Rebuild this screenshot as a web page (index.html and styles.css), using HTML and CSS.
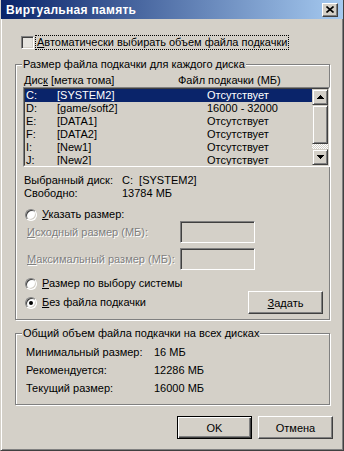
FILE: index.html
```html
<!DOCTYPE html>
<html lang="ru">
<head>
    <meta charset="UTF-8">
    <meta name="viewport" content="width=device-width, initial-scale=1.0">
    <title>Виртуальная память</title>
    <link rel="stylesheet" href="styles.css">
</head>
<body>

<div class="window">
    <!-- Title bar -->
    <div class="titlebar">
        <span class="title">Виртуальная память</span>
        <span class="close-btn">
            <svg width="8" height="7" viewBox="0 0 8 7"><path d="M0.5 0.5 L7.5 6.5 M7.5 0.5 L0.5 6.5" stroke="#000" stroke-width="1.6"/></svg>
        </span>
    </div>

    <div class="dialog">
        <div class="auto-row">
            <span class="checkbox"></span>
            <span class="focus-text"><u>А</u>втоматически выбирать объем файла подкачки</span>
        </div>

        <!-- Per-drive settings -->
        <fieldset class="group group-drives">
            <legend>Размер файла подкачки для каждого диска</legend>

            <div class="list-header">
                <span class="col-drive">Дис<u>к</u> [метка тома]</span>
                <span>Файл подкачки (МБ)</span>
            </div>

            <div class="listbox">
                <div class="list-inner">
                    <div class="list-rows">
                        <div class="list-row selected"><span>C:</span><span>[SYSTEM2]</span><span>Отсутствует</span></div>
                        <div class="list-row"><span>D:</span><span>[game/soft2]</span><span>16000 - 32000</span></div>
                        <div class="list-row"><span>E:</span><span>[DATA1]</span><span>Отсутствует</span></div>
                        <div class="list-row"><span>F:</span><span>[DATA2]</span><span>Отсутствует</span></div>
                        <div class="list-row"><span>I:</span><span>[New1]</span><span>Отсутствует</span></div>
                        <div class="list-row"><span>J:</span><span>[New2]</span><span>Отсутствует</span></div>
                    </div>
                    <div class="scrollbar">
                        <div class="sb-btn">
                            <svg width="7" height="4" viewBox="0 0 7 4" shape-rendering="crispEdges"><path d="M3 0h1v1h1v1h1v1h1v1h-7v-1h1v-1h1v-1h1z" fill="#000"/></svg>
                        </div>
                        <div class="sb-thumb"></div>
                        <div class="sb-track"></div>
                        <div class="sb-btn">
                            <svg width="7" height="4" viewBox="0 0 7 4" shape-rendering="crispEdges"><path d="M0 0h7v1h-1v1h-1v1h-1v1h-1v-1h-1v-1h-1v-1h-1z" fill="#000"/></svg>
                        </div>
                    </div>
                </div>
            </div>

            <div class="info-row first"><span class="info-label">Выбранный диск:</span><span>C:&nbsp; [SYSTEM2]</span></div>
            <div class="info-row"><span class="info-label">Свободно:</span><span>13784 МБ</span></div>

            <div class="radio-row custom">
                <span class="radio"></span>
                <span class="radio-text"><u>У</u>казать размер:</span>
            </div>
            <div class="size-row">
                <span class="size-label disabled"><u>И</u>сходный размер (МБ):</span>
                <span class="textbox"></span>
            </div>
            <div class="size-row second">
                <span class="size-label disabled"><u>М</u>аксимальный размер (МБ):</span>
                <span class="textbox"></span>
            </div>

            <div class="radio-row system">
                <span class="radio"></span>
                <span class="radio-text"><u>Р</u>азмер по выбору системы</span>
            </div>
            <div class="radio-row none">
                <span class="radio checked"></span>
                <span class="radio-text"><u>Б</u>ез файла подкачки</span>
                <span class="btn set-btn"><u>З</u>адать</span>
            </div>
        </fieldset>

        <!-- Totals for all drives -->
        <fieldset class="group group-total">
            <legend>Общий объем файла подкачки на всех дисках</legend>
            <div class="total-row"><span class="total-label">Минимальный размер:</span><span>16 МБ</span></div>
            <div class="total-row"><span class="total-label">Рекомендуется:</span><span>12286 МБ</span></div>
            <div class="total-row"><span class="total-label">Текущий размер:</span><span>16000 МБ</span></div>
        </fieldset>

        <div class="buttons">
            <span class="btn btn-default">OK</span>
            <span class="btn">Отмена</span>
        </div>
    </div>
</div>

</body>
</html>
```

FILE: styles.css
```css
body {
    margin: 0;
    background-color: #d4d0c8;
    font-family: "Liberation Sans", Arial, sans-serif;
    font-size: 11px;
    color: #000;
}

u {
    text-decoration-thickness: 1px;
    text-underline-offset: 1px;
}

/* Window frame */
.window {
    width: 344px;
    height: 451px;
    box-sizing: border-box;
    border: 1px solid;
    border-top: 0;
    border-color: #d4d0c8 #404040 #404040 #d4d0c8;
    box-shadow: inset 1px 0 #fff, inset -1px -1px #808080;
    background-color: #d4d0c8;
    white-space: nowrap;
}

.titlebar {
    height: 19px;
    display: flex;
    align-items: center;
    justify-content: space-between;
    padding: 0 5px 0 5px;
    background: linear-gradient(to right, #0a246a, #a6caf0);
    color: #fff;
    font-size: 12px;
    font-weight: bold;
    letter-spacing: 0.3px;
}

.close-btn {
    width: 16px;
    height: 14px;
    box-sizing: border-box;
    display: flex;
    align-items: center;
    justify-content: center;
    background-color: #d4d0c8;
    border: 1px solid;
    border-color: #fff #404040 #404040 #fff;
    box-shadow: inset -1px -1px #808080;
}

.dialog {
    padding: 16px 13px 0 14px;
}

/* Auto checkbox */
.auto-row {
    display: flex;
    align-items: center;
    height: 15px;
    margin-left: 6px;
}

.checkbox {
    width: 13px;
    height: 13px;
    box-sizing: border-box;
    background-color: #e6e4df;
    border: 1px solid;
    border-color: #808080 #fff #fff #808080;
    box-shadow: inset 1px 1px #404040, inset -1px -1px #d4d0c8;
}

.focus-text {
    margin-left: 1px;
    padding: 0 1px;
    line-height: 13px;
    border: 1px dotted #000;
}

/* Group boxes */
.group {
    margin: 7px 0 0 0;
    padding: 3px 0 5px 7px;
    min-width: 0;
    border: 1px solid #808080;
    box-shadow: inset 1px 1px #fff, 1px 1px #fff;
}

.group legend {
    padding: 0 1px;
    margin-left: -1px;
    line-height: 14px;
    background-color: #d4d0c8;
}

.list-header {
    display: flex;
    height: 13px;
    line-height: 13px;
    padding-left: 1px;
}

.col-drive {
    width: 154px;
}

/* Drive list */
.listbox {
    height: 80px;
    box-sizing: border-box;
    margin-right: -1px;
    border: 1px solid;
    border-color: #808080 #fff #fff #808080;
}

.list-inner {
    height: 100%;
    box-sizing: border-box;
    display: flex;
    border: 1px solid;
    border-color: #404040 #d4d0c8 #d4d0c8 #404040;
}

.list-rows {
    flex: 1;
    overflow: hidden;
}

.list-row {
    display: grid;
    grid-template-columns: 31px 150px 1fr;
    height: 13px;
    line-height: 13px;
    padding-left: 1px;
}

.list-row.selected {
    background-color: #0a246a;
    color: #fff;
}

.scrollbar {
    width: 16px;
    display: flex;
    flex-direction: column;
}

.sb-btn,
.sb-thumb {
    box-sizing: border-box;
    background-color: #d4d0c8;
    border: 1px solid;
    border-color: #d4d0c8 #404040 #404040 #d4d0c8;
    box-shadow: inset 1px 1px #fff, inset -1px -1px #808080;
}

.sb-btn {
    height: 16px;
    display: flex;
    align-items: center;
    justify-content: center;
}

.sb-thumb {
    height: 39px;
}

.sb-track {
    flex: 1;
    background-image: repeating-conic-gradient(#fff 0 25%, #d4d0c8 0 50%);
    background-size: 2px 2px;
}

/* Selected drive info */
.info-row {
    display: flex;
    height: 13px;
    line-height: 13px;
    padding-left: 1px;
}

.info-row.first {
    margin-top: 7px;
}

.info-label {
    width: 98px;
}

/* Radio options */
.radio-row {
    display: flex;
    align-items: center;
    height: 13px;
    padding-left: 2px;
}

.radio-row.custom {
    margin-top: 8px;
}

.radio-row.system {
    margin-top: 7px;
}

.radio-row.none {
    height: 23px;
    margin-top: 1px;
}

.radio {
    width: 12px;
    height: 12px;
    box-sizing: border-box;
    border-radius: 50%;
    background-color: #fff;
    border: 1px solid;
    border-color: #808080 #fff #fff #808080;
    box-shadow: inset 1px 1px #404040, inset -1px -1px #d4d0c8;
    display: flex;
    align-items: center;
    justify-content: center;
}

.radio.checked::after {
    content: "";
    width: 4px;
    height: 4px;
    border-radius: 50%;
    background-color: #000;
}

.radio-text {
    margin-left: 5px;
    line-height: 13px;
}

.size-row {
    display: flex;
    align-items: center;
    height: 22px;
    padding-left: 4px;
}

.size-row.second {
    margin-top: 5px;
}

.size-label {
    width: 153px;
}

.disabled {
    color: #808080;
    text-shadow: 1px 1px 0 #fff;
}

.textbox {
    width: 75px;
    height: 22px;
    box-sizing: border-box;
    border: 1px solid;
    border-color: #808080 #fff #fff #808080;
    box-shadow: inset 1px 1px #404040, inset -1px -1px #d4d0c8;
}

/* Buttons */
.btn {
    width: 75px;
    height: 23px;
    box-sizing: border-box;
    display: flex;
    align-items: center;
    justify-content: center;
    background-color: #d4d0c8;
    border: 1px solid;
    border-color: #fff #404040 #404040 #fff;
    box-shadow: inset -1px -1px #808080;
}

.btn-default {
    border-color: #000;
    box-shadow: inset 1px 1px #fff, inset -1px -1px #404040, inset -2px -2px #808080;
}

.set-btn {
    margin-left: auto;
    margin-right: 6px;
}

/* Totals */
.group-total {
    margin-top: 6px;
    padding-bottom: 7px;
}

.total-row {
    display: flex;
    align-items: center;
    height: 18px;
    padding-left: 3px;
}

.total-label {
    width: 128px;
}

.buttons {
    display: flex;
    justify-content: flex-end;
    gap: 6px;
    margin-top: 11px;
    margin-right: -3px;
}
```
